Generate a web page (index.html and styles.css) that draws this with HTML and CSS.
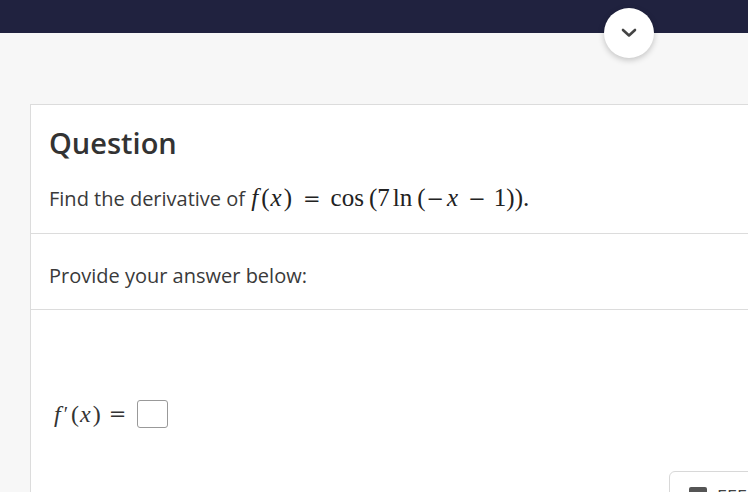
FILE: index.html
```html
<!DOCTYPE html>
<html>
<head>
<meta charset="utf-8">
<link rel="stylesheet" href="styles.css">
</head>
<body>
<header class="topbar"></header>
<button class="toggle" aria-label="Expand">
  <svg width="16" height="10" viewBox="0 0 16 10"><path d="M2 2 L8 7.5 L14 2" fill="none" stroke="#444" stroke-width="2.6" stroke-linecap="round" stroke-linejoin="round"/></svg>
</button>
<main class="page">
  <section class="card">
    <div class="sect head">
      <h1 class="title">Question</h1>
      <p class="prompt">Find the derivative of <span class="math"><i class="mf">f</i>(<i class="mx">x</i>)<span class="rel">=</span>cos<span class="sp"></span>(7<span class="sp2"></span>ln<span class="sp"></span>(<span class="op">−</span><i class="mx">x</i><span class="bin">−</span>1)).</span></p>
    </div>
    <div class="sect answer-label">
      <p class="label">Provide your answer below:</p>
    </div>
    <div class="sect work">
      <div class="eq"><i class="ef">f</i><span class="prime">′</span>(<i class="ex">x</i>)<span class="eqsign">=</span><span class="box"></span></div>
      <div class="tools">
        <button class="toolbtn"><span class="tico"></span><span class="ttxt">EEE</span></button>
      </div>
    </div>
  </section>
</main>
</body>
</html>
```
FILE: styles.css
```css
html, body {
  margin: 0;
  padding: 0;
}
body {
  background: #f7f7f7;
  font-family: "Open Sans", "Liberation Sans", sans-serif;
  color: #333;
  overflow: hidden;
  width: 748px;
  height: 492px;
  position: relative;
}
.topbar {
  height: 33px;
  background: #20223f;
}
.toggle {
  position: absolute;
  left: 604px;
  top: 8px;
  width: 50px;
  height: 50px;
  border-radius: 50%;
  border: none;
  background: #fff;
  box-shadow: 0 2px 6px rgba(0,0,0,0.22);
  display: flex;
  align-items: center;
  justify-content: center;
  padding: 0;
  z-index: 2;
}
.page {
  padding: 71px 0 0 30px;
}
.card {
  background: #fff;
  border: 1px solid #dcdcdc;
  width: 760px;
}
.sect {
  padding: 0 18px;
}
.head {
  padding-top: 19px;
  padding-bottom: 17px;
  border-bottom: 1px solid #dcdcdc;
}
.title {
  margin: 0;
  font-size: 29px;
  font-weight: 600;
  line-height: 38px;
  color: #333;
}
.prompt {
  margin: 20px 0 0;
  font-size: 20px;
  line-height: 34px;
  height: 34px;
  color: #3a3a3a;
  white-space: nowrap;
}
.math {
  font-family: "Liberation Serif", "DejaVu Serif", serif;
  font-size: 25px;
  line-height: 20px;
  color: #222;
}
.math i { font-style: italic; }
.mf { margin-right: 3px; margin-left: 1px; }
.mx { margin: 0 2px 0 1px; }
.rel, .bin, .op, .eqsign {
  font-family: "DejaVu Serif", serif;
  font-size: 21px;
}
.rel { margin: 0 10px 0 11px; }
.bin { margin: 0 8px 0 8px; }
.op { margin: 0 2px 0 1px; }
.sp { display: inline-block; width: 5px; }
.sp2 { display: inline-block; width: 3px; }
.answer-label {
  height: 76px;
  box-sizing: border-box;
  padding-top: 28px;
  border-bottom: 1px solid #dcdcdc;
}
.label {
  margin: 0;
  font-size: 20px;
  line-height: 27px;
  color: #3a3a3a;
}
.work {
  position: relative;
  height: 200px;
  padding-top: 90px;
  padding-left: 23px;
}
.eq {
  display: flex;
  align-items: center;
  font-family: "Liberation Serif", "DejaVu Serif", serif;
  font-size: 24px;
  color: #333;
}
.ef { margin-right: 1px; }
.prime { margin: 0 3px 0 2px; font-size: 20px; }
.ex { margin: 0 2px 0 1px; }
.eqsign { margin: 0 11px 0 8px; font-size: 21px; }
.box {
  width: 29px;
  height: 26px;
  border: 1px solid #999;
  border-radius: 3px;
}
.tools {
  position: absolute;
  left: 638px;
  top: 161px;
}
.toolbtn {
  display: flex;
  align-items: flex-start;
  gap: 10px;
  border: 1px solid #d8d8d8;
  border-radius: 6px;
  background: #fff;
  padding: 14px 20px 10px 19px;
  width: 120px;
  font-family: "Open Sans", sans-serif;
  font-size: 18px;
  color: #444;
}
.tico {
  width: 18px;
  height: 18px;
  background: #555;
  border-radius: 2px;
  margin-top: 1px;
}
.ttxt { line-height: 20px; }
```
